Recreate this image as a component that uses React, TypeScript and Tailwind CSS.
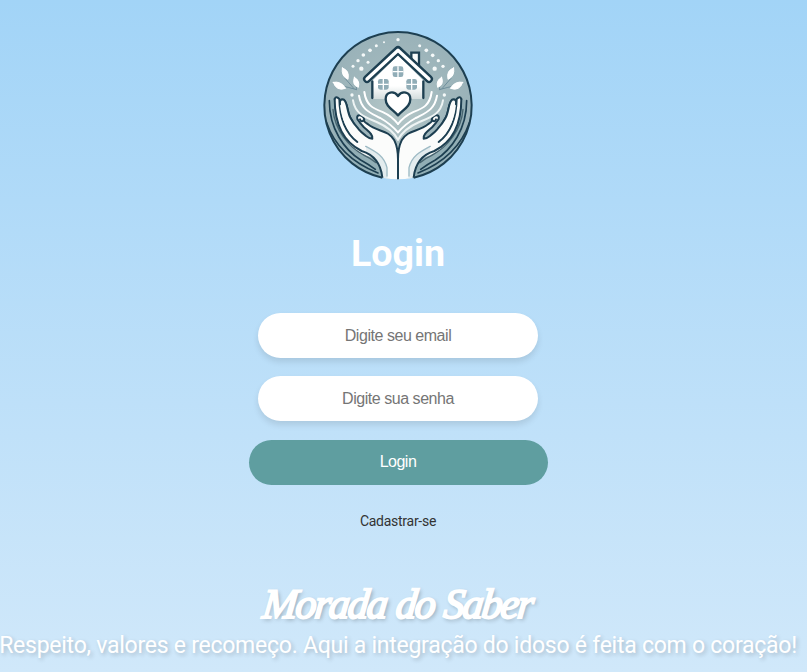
import React from "react";

const BRANCH_DOTS: [number, number, number][] = [
  [240, 41, 5], [198, 49, 3], [175, 59, 4.5], [156, 73, 5.5], [136, 87, 5.5],
  [120, 104, 5], [105, 121, 4.5], [150, 109, 4.5], [130, 128, 6.5], [102, 207, 5],
  [305, 59, 4.5], [325, 73, 5.5], [344, 88, 5.5], [361, 104, 5], [375, 121, 5],
  [330, 109, 4.5], [350, 128, 6.5], [379, 207, 5],
];

function HandSide() {
  return (
    <g strokeLinecap="round" strokeLinejoin="round">
      {/* sleeve rings following the rim */}
      <path d="M34 222C30 330 90 430 196 456L178 405C120 390 55 325 50 222Z" fill="#91aeb5" stroke="none" />
      <path d="M34 224C34 310 80 371 128 402Q150 414 172 430" fill="none" stroke="#1d3f51" strokeWidth="5" />
      <path d="M26 290C48 355 99 408 180 441" fill="none" stroke="#1d3f51" strokeWidth="5" />
      <path d="M45 250C50 312 91 362 140 389Q160 398 174 410" fill="none" stroke="#47646f" strokeWidth="4" />
      {/* palm and raised fingers */}
      <path
        d="M50 219Q55 208 64 220Q66 230 68 239L66 228Q69 216 80 224C91 235 89 258 99 273L116 292C119 285 125 279 127 284Q116 280 117 272Q121 265 130 269L149 294C175 316 206 312 226 340Q240 358 240 394V462Q215 463 193 457C190 427 185 405 159 393C90 370 52 309 50 219Z"
        fill="#fbfcfb"
      />
      <path d="M144 362C173 376 196 389 207 425L209 457L193 456C190 417 173 397 145 382Z" fill="#e3ecee" />
      <path d="M143 361C175 378 198 390 207 425V450" fill="none" stroke="#9ebbc5" strokeWidth="4" />
      <path d="M50 219C50 287 73 346 131 375Q186 392 193 454" fill="none" stroke="#1d3f51" strokeWidth="6" />
      <path d="M50 219Q54 208 64 219C65 270 77 317 118 348" fill="none" stroke="#1d3f51" strokeWidth="6" />
      <path d="M66 235Q64 217 77 221C89 228 87 259 98 277C106 291 115 302 126 312C138 324 151 338 163 338C166 326 145 316 134 302" fill="#9db5bb" stroke="none" />
      <path d="M66 235Q64 217 77 221C89 228 87 259 98 277C108 296 127 317 143 329Q154 338 163 338C166 325 150 315 137 303Q124 290 118 279Q115 267 126 268Q137 270 139 282" fill="none" stroke="#1d3f51" strokeWidth="6" />
      <path d="M66 235C64 222 72 219 77 222C89 228 87 259 98 277L120 305L112 338C86 312 70 280 66 235Z" fill="#fbfcfb" />
      <path d="M66 235Q64 217 77 221C89 228 87 259 98 277C105 290 112 299 120 307" fill="none" stroke="#1d3f51" strokeWidth="6" />
      <path d="M126 280Q130 290 136 283Q143 291 149 294C179 319 210 310 229 343Q240 365 240 400V459" fill="none" stroke="#1d3f51" strokeWidth="6" />
      {/* radiating bands */}
      <path d="M139 198C145 240 166 247 196 259Q221 270 240 294" fill="none" stroke="white" strokeWidth="6" />
      <path d="M123 209C130 253 159 261 187 276Q217 293 240 319" fill="none" stroke="white" strokeWidth="6" />
      <path d="M105 223C112 266 145 275 176 288C204 300 226 315 240 341" fill="none" stroke="#eef4f4" strokeWidth="6" />
      {/* leaves */}
      <path d="M64 179Q91 183 116 191M81 157L108 188M115 177L115 190" fill="none" stroke="#6f8f9c" strokeWidth="3" />
      <path d="M46 169Q68 164 83 187Q55 197 46 169ZM73 126Q96 133 90 160Q69 151 73 126ZM109 154Q127 163 121 184Q101 177 109 154Z" fill="white" stroke="white" strokeWidth="3" />
    </g>
  );
}

function Logo() {
  return (
    <svg viewBox="0 0 480 480" className="block size-[160px]" role="img" aria-label="Morada do Saber">
      <defs>
        <radialGradient id="disc" cx="50%" cy="52%" r="55%">
          <stop offset="0" stopColor="#b6c8c9" />
          <stop offset="0.6" stopColor="#a0b7bc" />
          <stop offset="1" stopColor="#98b1b8" />
        </radialGradient>
        <linearGradient id="house" x1="0" y1="0" x2="0" y2="1">
          <stop offset="0.7" stopColor="#ffffff" />
          <stop offset="1" stopColor="#d4dddd" />
        </linearGradient>
        <clipPath id="rim"><circle cx="240" cy="239" r="221" /></clipPath>
      </defs>
      <g clipPath="url(#rim)">
        <circle cx="240" cy="239" r="221" fill="url(#disc)" />
        <HandSide />
        <g transform="translate(480 0) scale(-1 1)"><HandSide /></g>
        <path d="M163 164L240 88L317 164V219H163Z" fill="url(#house)" />
        <path d="M163 166V216M316 166V216" stroke="#1d3f51" strokeWidth="7" strokeLinecap="round" />
        <path d="M280 105V80H303V127Z" fill="#f8fbfb" stroke="#1d3f51" strokeWidth="7" />
        <path d="M147 159L240 72L333 159" fill="none" stroke="#1d3f51" strokeWidth="24" strokeLinecap="round" strokeLinejoin="round" />
        <path d="M147 159L240 73L333 159" fill="none" stroke="white" strokeWidth="10" strokeLinecap="round" strokeLinejoin="round" />
        {[[224, 121], [180, 159], [265, 159]].map(([x, y]) => (
          <g key={x} transform={`translate(${x} ${y})`}>
            <rect width="32" height="32" rx="7" fill="#91adb7" />
            <path d="M16 0V32M0 16H32" stroke="white" strokeWidth="4" />
          </g>
        ))}
        <path d="M240 268C222 249 203 241 203 219C203 197 228 193 240 210C252 193 277 197 277 219C277 241 258 249 240 268Z" fill="white" stroke="#1d3f51" strokeWidth="7" strokeLinejoin="round" />
        {BRANCH_DOTS.map(([x, y, r]) => <circle key={`${x}-${y}`} cx={x} cy={y} r={r} fill="#f5f9f9" />)}
      </g>
      <path d="M193 455A221 221 0 1 1 287 455" fill="none" stroke="#1d3f51" strokeWidth="6" />
    </svg>
  );
}

const field =
  "h-[45px] w-[280px] rounded-full bg-white text-center text-base tracking-[-0.46px] text-gray-700 shadow-[0_4px_6px_rgba(0,0,0,0.1)] outline-none placeholder:text-[#757575] font-['Liberation_Sans',Arial,sans-serif]";

export default function App() {
  return (
    <main className="flex h-[672px] w-full flex-col items-center overflow-hidden bg-linear-to-b from-[#a2d4f7] to-[#d0e8fa] pr-[11px] pt-[26px] font-[Roboto,sans-serif]">
      <Logo />
      <h1 className="mt-[44px] text-[37.6px] leading-[46px] font-bold text-white">Login</h1>
      <form className="mt-[37px] flex flex-col items-center" onSubmit={(e) => e.preventDefault()}>
        <input type="email" placeholder="Digite seu email" className={field} />
        <input type="password" placeholder="Digite sua senha" className={`${field} mt-[18px]`} />
        <button className="mt-[19px] h-[45px] w-[299px] rounded-full bg-[#5f9ea0] pb-[2px] font-['Liberation_Sans',Arial,sans-serif] text-base tracking-[-0.5px] text-white">
          Login
        </button>
      </form>
      <a href="#" className="mt-[28px] text-[14px] leading-4 tracking-[-0.27px] text-[#333]">Cadastrar-se</a>
      <h2 className="mt-[51px] mr-[2px] flex h-[48px] w-[269px] -skew-x-6 items-center justify-between font-['Brush_Script_MT','Liberation_Serif',cursive] text-[42px] leading-[48px] font-normal text-white italic [-webkit-text-stroke:2px_white] [text-shadow:2px_2px_4px_rgba(0,0,0,0.3)]">
        <span className="tracking-[-2px]">Morada</span>
        <span className="tracking-[-2px]">do</span>
        <span className="tracking-[-2px]">Saber</span>
      </h2>
      <p className="mt-[4px] text-[23px] leading-7 tracking-[-0.25px] whitespace-nowrap text-white [text-shadow:2px_2px_4px_rgba(0,0,0,0.2)]">
        Respeito, valores e recomeço. Aqui a integração do idoso é feita com o coração!
      </p>
    </main>
  );
}
